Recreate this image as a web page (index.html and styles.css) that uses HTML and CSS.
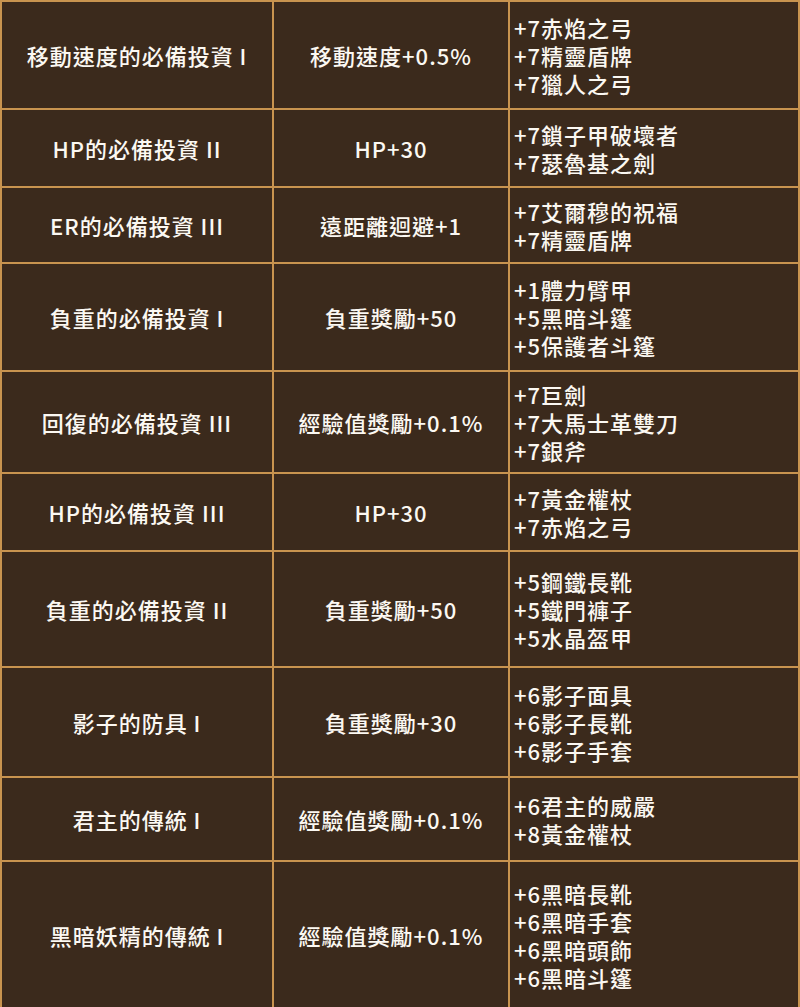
FILE: index.html
```html
<!DOCTYPE html>
<html lang="zh-Hant">
<head>
<meta charset="utf-8">
<link rel="stylesheet" href="styles.css">
</head>
<body>
<table class="sets">
  <tr class="r1"><td class="name">移動速度的必備投資 I</td><td class="bonus">移動速度+0.5%</td><td class="items">+7赤焰之弓<br>+7精靈盾牌<br>+7獵人之弓</td></tr>
  <tr class="r2"><td class="name">HP的必備投資 II</td><td class="bonus">HP+30</td><td class="items">+7鎖子甲破壞者<br>+7瑟魯基之劍</td></tr>
  <tr class="r3"><td class="name">ER的必備投資 III</td><td class="bonus">遠距離迴避+1</td><td class="items">+7艾爾穆的祝福<br>+7精靈盾牌</td></tr>
  <tr class="r4"><td class="name">負重的必備投資 I</td><td class="bonus">負重獎勵+50</td><td class="items">+1體力臂甲<br>+5黑暗斗篷<br>+5保護者斗篷</td></tr>
  <tr class="r5"><td class="name">回復的必備投資 III</td><td class="bonus">經驗值獎勵+0.1%</td><td class="items">+7巨劍<br>+7大馬士革雙刀<br>+7銀斧</td></tr>
  <tr class="r6"><td class="name">HP的必備投資 III</td><td class="bonus">HP+30</td><td class="items">+7黃金權杖<br>+7赤焰之弓</td></tr>
  <tr class="r7"><td class="name">負重的必備投資 II</td><td class="bonus">負重獎勵+50</td><td class="items">+5鋼鐵長靴<br>+5鐵門褲子<br>+5水晶盔甲</td></tr>
  <tr class="r8"><td class="name">影子的防具 I</td><td class="bonus">負重獎勵+30</td><td class="items">+6影子面具<br>+6影子長靴<br>+6影子手套</td></tr>
  <tr class="r9"><td class="name">君主的傳統 I</td><td class="bonus">經驗值獎勵+0.1%</td><td class="items">+6君主的威嚴<br>+8黃金權杖</td></tr>
  <tr class="r10"><td class="name">黑暗妖精的傳統 I</td><td class="bonus">經驗值獎勵+0.1%</td><td class="items">+6黑暗長靴<br>+6黑暗手套<br>+6黑暗頭飾<br>+6黑暗斗篷</td></tr>
</table>
</body>
</html>
```
FILE: styles.css
```css
html, body {
  margin: 0;
  padding: 0;
  background: #3b2a1c;
}
.sets {
  width: 800px;
  height: 1007px;
  border-collapse: collapse;
  table-layout: fixed;
  background: #3b2a1c;
  font-family: "Noto Sans CJK TC", "Noto Sans", sans-serif;
  font-weight: 500;
  font-size: 22px;
  letter-spacing: 1px;
  line-height: 28px;
  color: #fbf8f2;
}
.sets td {
  border: 2px solid #c8944f;
  padding: 0 4px;
  vertical-align: middle;
}
.sets td.name { width: 262px; text-align: center; }
.sets td.bonus { width: 226px; text-align: center; }
.sets td.items { text-align: left; }
.r1 { height: 108px; }
.r2 { height: 78px; }
.r3 { height: 76px; }
.r4 { height: 108px; }
.r5 { height: 102px; }
.r6 { height: 78px; }
.r7 { height: 116px; }
.r8 { height: 110px; }
.r9 { height: 84px; }
.r10 { height: 147px; }
```
